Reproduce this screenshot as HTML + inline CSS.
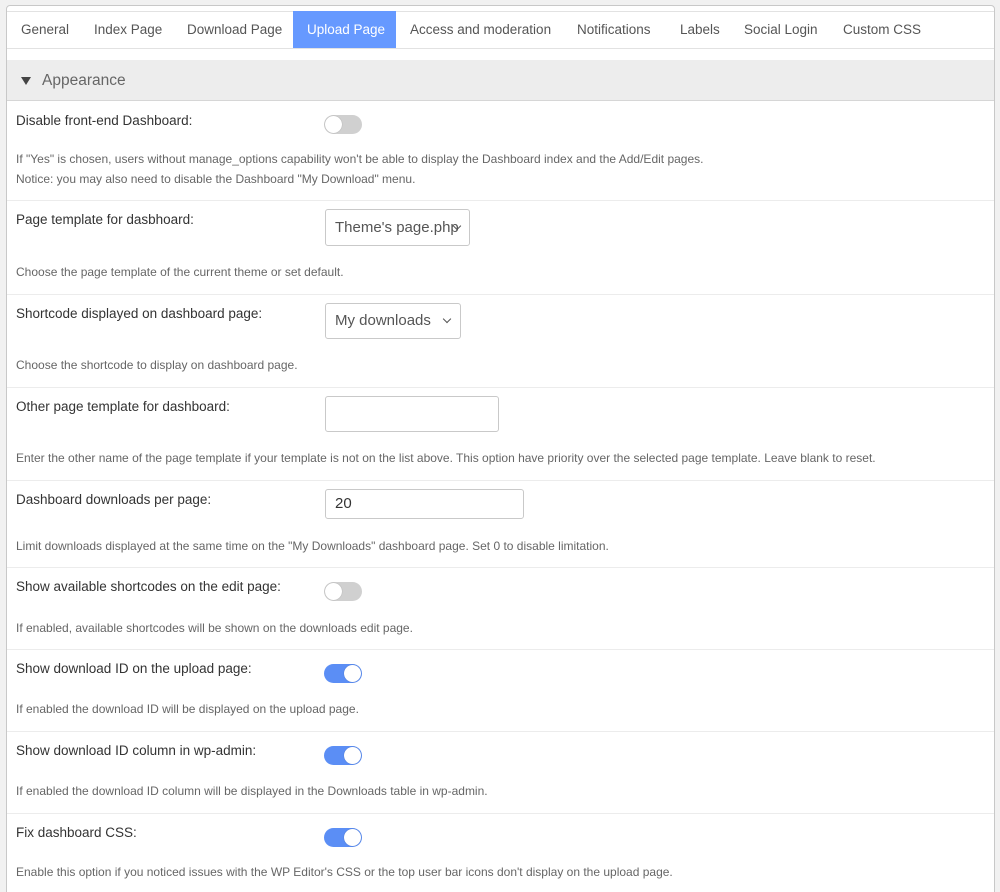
<!DOCTYPE html>
<html><head><meta charset="utf-8"><style>
*{box-sizing:border-box;margin:0;padding:0}
html,body{width:1000px;height:892px;overflow:hidden}
body{background:#f1f1f1;font-family:"Liberation Sans",sans-serif;position:relative;color:#333}
.panel{position:absolute;left:6px;top:5px;width:989px;height:900px;background:#fff;border:1px solid #c8c8c8;border-radius:4px}
.tabs{position:absolute;left:7px;top:11px;width:987px;height:38px;border-top:1px solid #e2e2e2;border-bottom:1px solid #e2e2e2}
.tab{position:absolute;top:11px;height:37px;line-height:37px;font-size:13.5px;color:#555;white-space:nowrap}
.tab.act{background:#6699ff;color:#fff;padding:0 14px}
.hdr{position:absolute;left:7px;top:60px;width:987px;height:41px;background:#ededed;border-bottom:1px solid #d6d6d6}
.hdr span{position:absolute;left:35px;top:12px;font-size:15.5px;color:#666}
.hdr i{position:absolute;left:14px;top:17px;width:0;height:0;border-left:5px solid transparent;border-right:5px solid transparent;border-top:8px solid #444}
.lbl{position:absolute;left:16px;font-size:13.5px;color:#333;white-space:nowrap}
.desc{position:absolute;left:16px;font-size:12px;color:#666;line-height:20px;white-space:nowrap}
.sep{position:absolute;left:7px;width:987px;height:1px;background:#ececec}
.tg{position:absolute;left:324px;width:38px;height:19px;border-radius:10px;background:#d0d0d0}
.tg::after{content:"";position:absolute;left:1px;top:1px;width:17px;height:17px;border-radius:50%;background:#fff;box-shadow:0 0 1px rgba(0,0,0,.3)}
.tg.on{background:#5b8ef5}
.tg.on::after{left:20px}
.box{position:absolute;left:325px;border:1px solid #c9c9c9;border-radius:3px;background:#fff;font-size:15px;color:#555;padding-left:9px;white-space:nowrap;overflow:hidden}
.chev{position:absolute;width:6px;height:6px;border-right:1.5px solid #555;border-bottom:1.5px solid #555;transform:rotate(45deg)}
</style></head><body>
<div class="panel"></div>
<div class="tabs"></div>
<div class="tab" style="left:21px">General</div>
<div class="tab" style="left:94px">Index Page</div>
<div class="tab" style="left:187px">Download Page</div>
<div class="tab act" style="left:293px;width:103px">Upload Page</div>
<div class="tab" style="left:410px">Access and moderation</div>
<div class="tab" style="left:577px">Notifications</div>
<div class="tab" style="left:680px">Labels</div>
<div class="tab" style="left:744px">Social Login</div>
<div class="tab" style="left:843px">Custom CSS</div>
<div class="hdr"><i></i><span>Appearance</span></div>

<div class="lbl" style="top:113px">Disable front-end Dashboard:</div>
<div class="tg" style="top:115px"></div>
<div class="desc" style="top:149px">If "Yes" is chosen, users without manage_options capability won't be able to display the Dashboard index and the Add/Edit pages.<br>Notice: you may also need to disable the Dashboard "My Download" menu.</div>
<div class="sep" style="top:200px"></div>

<div class="lbl" style="top:212px">Page template for dasbhoard:</div>
<div class="box" style="top:209px;width:145px;height:37px;line-height:35px">Theme's page.php<span class="chev" style="left:128px;top:13px"></span></div>
<div class="desc" style="top:262px">Choose the page template of the current theme or set default.</div>
<div class="sep" style="top:294px"></div>

<div class="lbl" style="top:306px">Shortcode displayed on dashboard page:</div>
<div class="box" style="top:303px;width:136px;height:36px;line-height:34px">My downloads<span class="chev" style="left:118px;top:12px"></span></div>
<div class="desc" style="top:355px">Choose the shortcode to display on dashboard page.</div>
<div class="sep" style="top:387px"></div>

<div class="lbl" style="top:399px">Other page template for dashboard:</div>
<div class="box" style="top:396px;width:174px;height:36px"></div>
<div class="desc" style="top:448px">Enter the other name of the page template if your template is not on the list above. This option have priority over the selected page template. Leave blank to reset.</div>
<div class="sep" style="top:480px"></div>

<div class="lbl" style="top:492px">Dashboard downloads per page:</div>
<div class="box" style="top:489px;width:199px;height:30px;line-height:28px;color:#333">20</div>
<div class="desc" style="top:536px">Limit downloads displayed at the same time on the "My Downloads" dashboard page. Set 0 to disable limitation.</div>
<div class="sep" style="top:567px"></div>

<div class="lbl" style="top:579px">Show available shortcodes on the edit page:</div>
<div class="tg" style="top:582px"></div>
<div class="desc" style="top:618px">If enabled, available shortcodes will be shown on the downloads edit page.</div>
<div class="sep" style="top:649px"></div>

<div class="lbl" style="top:661px">Show download ID on the upload page:</div>
<div class="tg on" style="top:664px"></div>
<div class="desc" style="top:699px">If enabled the download ID will be displayed on the upload page.</div>
<div class="sep" style="top:731px"></div>

<div class="lbl" style="top:743px">Show download ID column in wp-admin:</div>
<div class="tg on" style="top:746px"></div>
<div class="desc" style="top:781px">If enabled the download ID column will be displayed in the Downloads table in wp-admin.</div>
<div class="sep" style="top:813px"></div>

<div class="lbl" style="top:825px">Fix dashboard CSS:</div>
<div class="tg on" style="top:828px"></div>
<div class="desc" style="top:862px">Enable this option if you noticed issues with the WP Editor's CSS or the top user bar icons don't display on the upload page.</div>
</body></html>
